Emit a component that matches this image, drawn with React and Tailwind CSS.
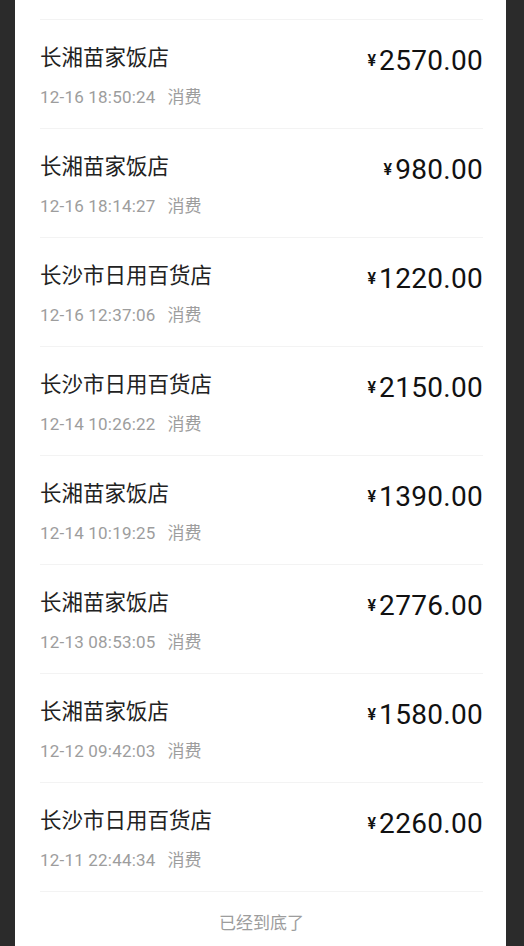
import React from 'react';

const records = [
  { name: '长湘苗家饭店', time: '12-16 18:50:24', amount: '2570.00' },
  { name: '长湘苗家饭店', time: '12-16 18:14:27', amount: '980.00' },
  { name: '长沙市日用百货店', time: '12-16 12:37:06', amount: '1220.00' },
  { name: '长沙市日用百货店', time: '12-14 10:26:22', amount: '2150.00' },
  { name: '长湘苗家饭店', time: '12-14 10:19:25', amount: '1390.00' },
  { name: '长湘苗家饭店', time: '12-13 08:53:05', amount: '2776.00' },
  { name: '长湘苗家饭店', time: '12-12 09:42:03', amount: '1580.00' },
  { name: '长沙市日用百货店', time: '12-11 22:44:34', amount: '2260.00' },
];

const font = { fontFamily: 'Roboto, "Noto Sans CJK SC", sans-serif' };

export default function App() {
  return (
    <div className="h-[946px] overflow-hidden bg-[#2b2b2b] pl-[15px] pr-[18px]" style={font}>
      <div className="bg-white pl-[25px] pr-[23px] pt-[19px] min-h-[946px]">
        {records.map((r, i) => (
          <div key={i} className="h-[109px] border-t border-[#f3f3f3] flex justify-between">
            <div className="pt-[24px]">
              <div className="text-[21.5px] leading-[28px] text-[#222]">{r.name}</div>
              <div className="mt-[14px] text-[17px] leading-[22px] text-[#9d9d9d] flex gap-[12px]">
                <span className="tracking-[0.2px]">{r.time}</span>
                <span>消费</span>
              </div>
            </div>
            <div className="pt-[24px] h-fit flex items-center text-[#111]">
              <span className="text-[16px] leading-[34px] font-semibold mr-[3px]">¥</span>
              <span className="text-[28px] leading-[34px] font-normal tracking-[0.3px]">{r.amount}</span>
            </div>
          </div>
        ))}
        <div className="border-t border-[#f3f3f3] pt-[20px] text-center text-[17px] leading-[22px] text-[#9d9d9d]">
          已经到底了
        </div>
      </div>
    </div>
  );
}
